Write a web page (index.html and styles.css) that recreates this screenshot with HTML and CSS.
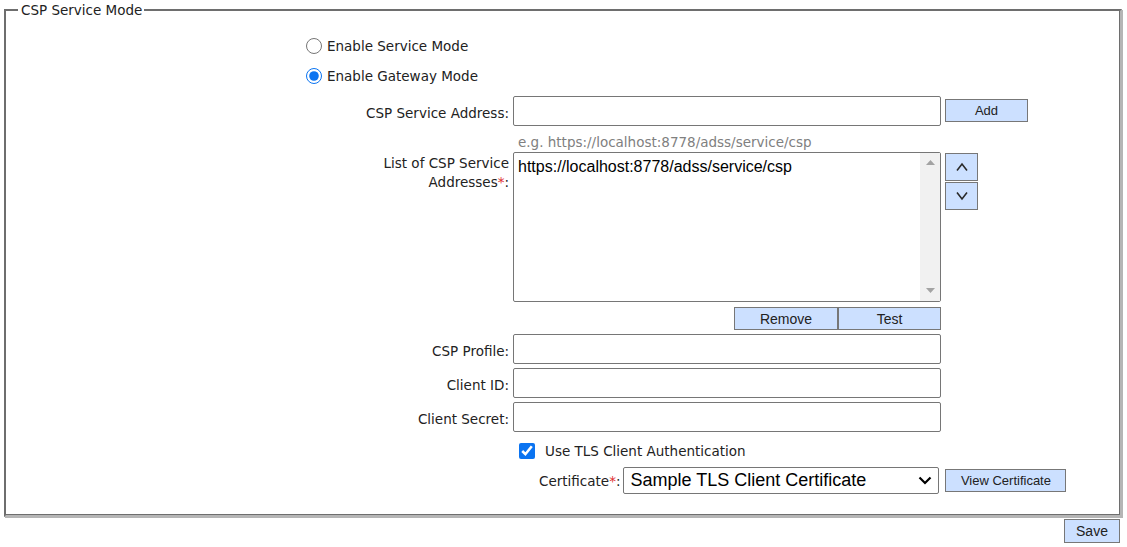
FILE: index.html
```html
<!DOCTYPE html>
<html>
<head>
<meta charset="utf-8">
<link rel="stylesheet" href="styles.css">
</head>
<body>
<div class="page">
  <fieldset class="box">
    <legend class="legend">CSP Service Mode</legend>
    <div class="modes">
      <label class="mode"><input type="radio" name="mode" class="radio"><span>Enable Service Mode</span></label>
      <label class="mode"><input type="radio" name="mode" class="radio" checked><span>Enable Gateway Mode</span></label>
    </div>
    <div class="form">
      <div class="lbl lbl-mid">CSP Service Address:</div>
      <input class="txt" type="text">
      <div class="side side-mid"><button class="btn btn-add">Add</button></div>

      <div class="lbl"></div>
      <div class="hint">e.g. https://localhost:8778/adss/service/csp</div>
      <div class="side"></div>

      <div class="lbl lbl-top">List of CSP Service<br>Addresses<span class="req">*</span>:</div>
      <div class="listbox">
        <div class="list-items"><div class="list-item">https://localhost:8778/adss/service/csp</div></div>
        <div class="scroll">
          <svg width="9" height="6" viewBox="0 0 9 6"><path d="M0 5 L4.5 0 L9 5 Z" fill="#a3a3a3"/></svg>
          <svg width="9" height="6" viewBox="0 0 9 6"><path d="M0 0 L4.5 5 L9 0 Z" fill="#a3a3a3"/></svg>
        </div>
      </div>
      <div class="side side-top">
        <button class="btn btn-arrow"><svg width="14" height="10" viewBox="0 0 14 10"><path d="M2 8.5 L7 2 L12 8.5" fill="none" stroke="#2a2a2a" stroke-width="1.6"/></svg></button>
        <button class="btn btn-arrow"><svg width="14" height="10" viewBox="0 0 14 10"><path d="M2 1.5 L7 8 L12 1.5" fill="none" stroke="#2a2a2a" stroke-width="1.6"/></svg></button>
      </div>

      <div class="lbl"></div>
      <div class="list-actions"><button class="btn btn-remove">Remove</button><button class="btn btn-test">Test</button></div>
      <div class="side"></div>

      <div class="lbl lbl-mid">CSP Profile:</div>
      <input class="txt" type="text">
      <div class="side"></div>

      <div class="lbl lbl-mid">Client ID:</div>
      <input class="txt" type="text">
      <div class="side"></div>

      <div class="lbl lbl-mid">Client Secret:</div>
      <input class="txt" type="text">
      <div class="side"></div>

      <div class="lbl"></div>
      <label class="tls"><input type="checkbox" class="check" checked><span>Use TLS Client Authentication</span></label>
      <div class="side"></div>
    </div>
    <div class="cert-row">
      <div class="cert-lbl">Certificate<span class="req">*</span>:</div>
      <div class="select"><span>Sample TLS Client Certificate</span><svg width="14" height="9" viewBox="0 0 14 9"><path d="M1.5 1.5 L7 7 L12.5 1.5" fill="none" stroke="#000" stroke-width="2.2"/></svg></div>
      <button class="btn btn-view">View Certificate</button>
    </div>
  </fieldset>
  <div class="footer"><button class="btn btn-save">Save</button></div>
</div>
</body>
</html>
```

FILE: styles.css
```css
html, body {
  margin: 0;
  padding: 0;
  background: #fff;
}
body {
  font-family: "DejaVu Sans", Tahoma, sans-serif;
  font-size: 13.5px;
  color: #222;
}
.page {
  width: 1118px;
  padding: 2px 0 0 4px;
}
.box {
  margin: 0;
  padding: 0 0 21px 0;
  border: 2px solid #6e6e6e;
  border-color: #6e6e6e #b5b5b5 #b5b5b5 #6e6e6e;
  box-shadow: inset -1px -1px 0 #6e6e6e, 1px 1px 0 #b5b5b5;
}
.legend {
  margin-left: 12px;
  padding: 0 2px 0 3px;
  font-size: 13.5px;
  color: #222;
}
.modes {
  display: flex;
  flex-direction: column;
  gap: 10px;
  margin: 18px 0 0 300px;
}
.mode {
  display: flex;
  align-items: center;
  gap: 5px;
  height: 20px;
}
.radio {
  width: 16px;
  height: 16px;
  margin: 0;
  accent-color: #0b74f1;
}
.form {
  display: grid;
  grid-template-columns: 503px 428px 1fr;
  column-gap: 4px;
  margin-top: 10px;
}
.lbl {
  text-align: right;
  line-height: 19px;
}
.lbl-mid {
  align-self: center;
}
.lbl-top {
  padding-top: 2px;
}
.req {
  color: #e03030;
}
.txt {
  box-sizing: border-box;
  height: 30px;
  margin: 0 0 4px 0;
  border: 1px solid #767676;
  border-radius: 2px;
  font-family: "Liberation Sans", Arial, sans-serif;
  font-size: 16px;
}
.side {
  display: flex;
}
.side-mid {
  align-items: flex-start;
  padding-top: 3px;
}
.side-top {
  flex-direction: column;
  gap: 1px;
  padding-top: 1px;
}
.btn {
  box-sizing: border-box;
  margin: 0;
  padding: 0;
  background: #cce0ff;
  border: 1px solid #777;
  border-radius: 0;
  font-family: "Liberation Sans", Arial, sans-serif;
  font-size: 13px;
  color: #222;
}
.btn-add {
  width: 83px;
  height: 23px;
}
.hint {
  color: #808080;
  padding: 5px 0 0 5px;
  height: 22px;
  box-sizing: border-box;
  font-size: 13.5px;
  line-height: 15px;
}
.listbox {
  box-sizing: border-box;
  height: 150px;
  border: 1px solid #767676;
  border-radius: 2px;
  display: flex;
}
.list-items {
  flex: 1;
  padding: 5px 4px;
  font-family: "Liberation Sans", Arial, sans-serif;
  font-size: 16px;
  color: #000;
}
.scroll {
  width: 20px;
  background: #f1f1f1;
  display: flex;
  flex-direction: column;
  justify-content: space-between;
  align-items: center;
  padding: 7px 0 7px 0;
}
.btn-arrow {
  width: 33px;
  height: 28px;
  display: flex;
  align-items: center;
  justify-content: center;
}
.list-actions {
  display: flex;
  justify-content: flex-end;
  padding: 5px 0 4px 0;
}
.btn-remove {
  width: 104px;
  height: 23px;
  font-size: 14px;
}
.btn-test {
  width: 103px;
  height: 23px;
  font-size: 14px;
}
.tls {
  display: flex;
  align-items: center;
  gap: 10px;
  padding: 5px 0 0 6px;
  height: 20px;
}
.check {
  width: 16px;
  height: 16px;
  margin: 0;
  accent-color: #0b74f1;
}
.cert-row {
  display: flex;
  align-items: center;
  margin: 6px 0 0 533px;
}
.cert-lbl {
  margin-right: 3px;
}
.select {
  box-sizing: border-box;
  width: 316px;
  height: 27px;
  border: 1px solid #767676;
  border-radius: 2px;
  display: flex;
  align-items: center;
  justify-content: space-between;
  padding: 0 6px 0 6px;
  font-family: "Liberation Sans", Arial, sans-serif;
  font-size: 18px;
  color: #000;
}
.btn-view {
  width: 121px;
  height: 23px;
  margin-left: 6px;
}
.footer {
  display: flex;
  justify-content: flex-end;
  padding: 2px 2px 0 0;
}
.btn-save {
  width: 56px;
  height: 24px;
  font-size: 14px;
}
```
